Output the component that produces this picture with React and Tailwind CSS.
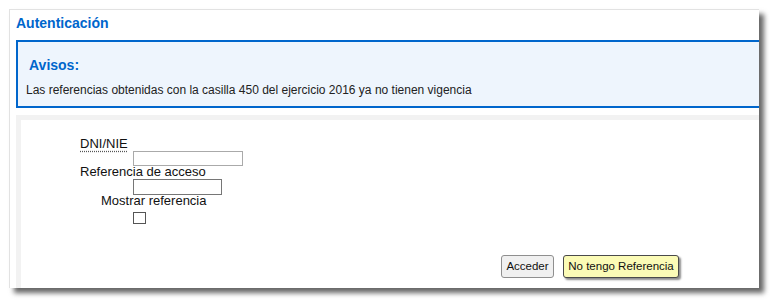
import React from "react";

export default function App() {
    return (
        <div className="w-[770px] h-[301px] bg-white overflow-hidden" style={{ fontFamily: '"Liberation Sans", Arial, sans-serif' }}>
            {/* window */}
            <div className="ml-[9px] mt-[9px] w-[750px] h-[279px] bg-white border-t border-l border-[#e2e2e2] shadow-[5px_5px_5px_rgba(0,0,0,0.6)] overflow-hidden flex flex-col">
                <div className="pl-[6px] pt-[3px] mb-[7px]">
                    <h1 className="text-[14px] leading-[20px] font-bold text-[#0066cc]">Autenticación</h1>
                </div>

                {/* Avisos */}
                <div className="ml-[6px] border-t-2 border-b-2 border-l-2 border-[#0066cc] bg-[#eef5fd] pt-[13px] pb-[8px]">
                    <h2 className="pl-[11px] text-[14px] leading-[20px] font-bold text-[#0066cc]">Avisos:</h2>
                    <p className="mt-[7px] pl-[8px] text-[12px] leading-[16px] text-[#222]">
                        Las referencias obtenidas con la casilla 450 del ejercicio 2016 ya no tienen vigencia
                    </p>
                </div>

                {/* form panel */}
                <div className="ml-[6px] mt-[7px] flex-1 border-t-[5px] border-l-[5px] border-[#f2f2f2] bg-white pl-[59px] pt-[17px] text-[13px] text-[#111]">
                    <div className="leading-[13px]">
                        <span className="underline decoration-dotted decoration-[#555] underline-offset-[3px]">DNI/NIE</span>
                    </div>
                    <input type="text" className="block ml-[53px] mt-[1px] w-[110px] h-[15px] border border-[#aaaaaa] bg-white outline-none" />
                    <div className="leading-[13px] -mt-[1px]">Referencia de acceso</div>
                    <input type="text" className="block ml-[53px] mt-[1px] w-[89px] h-[16px] border border-[#767676] bg-white outline-none" />
                    <div className="leading-[13px] -mt-[1px] ml-[21px]">Mostrar referencia</div>
                    <div className="ml-[53px] mt-[5px] w-[13px] h-[12px] border border-[#555] bg-white"></div>

                    <div className="flex items-start gap-[9px] ml-[421px] mt-[31px]">
                        <button className="h-[23px] w-[53px] border border-[#8f8f8f] rounded-[3px] bg-[#f0f0f0] text-[11.5px] text-[#111]">
                            Acceder
                        </button>
                        <button className="h-[23px] w-[116px] border border-[#4a4a4a] rounded-[3px] bg-[#fbfbb6] text-[11.5px] text-[#111] shadow-[2px_2px_2px_rgba(0,0,0,0.45)]">
                            No tengo Referencia
                        </button>
                    </div>
                </div>
            </div>
        </div>
    );
}
